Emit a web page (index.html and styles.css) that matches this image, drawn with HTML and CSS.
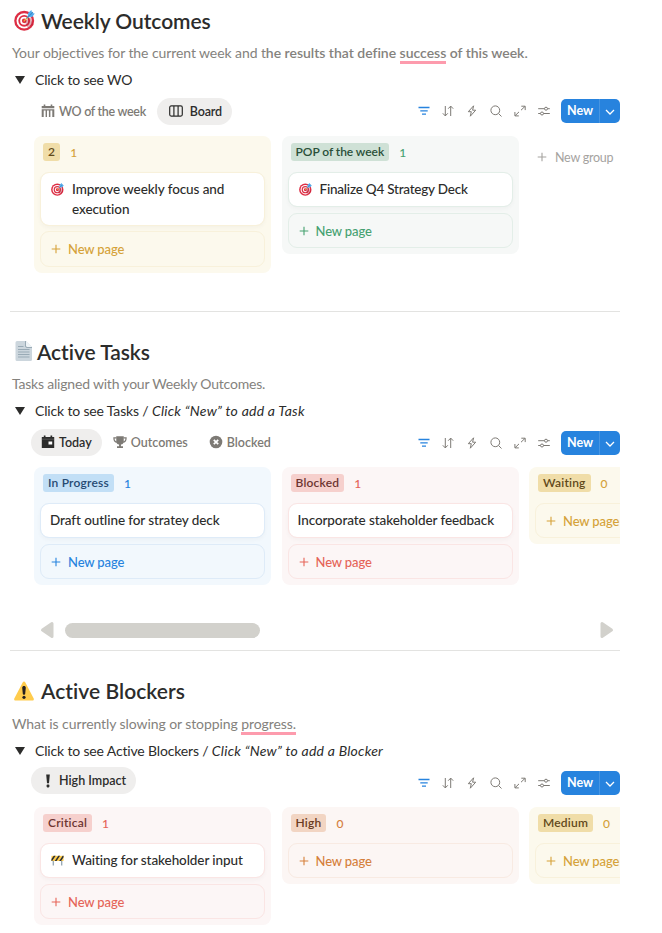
FILE: index.html
```html
<!DOCTYPE html>
<html lang="en">
<head>
  <meta charset="UTF-8" />
  <meta name="viewport" content="width=device-width, initial-scale=1.0" />
  <title>Weekly Outcomes</title>
  <link rel="stylesheet" href="styles.css">
</head>
<body>
  <!-- Shared icons -->
  <svg class="sprite" width="0" height="0">
    <symbol id="target" viewBox="0 0 20 20">
      <circle cx="9.7" cy="10.3" r="9.5" fill="#dd2e44" />
      <circle cx="9.7" cy="10.3" r="7.3" fill="#fff" />
      <circle cx="9.7" cy="10.3" r="5.6" fill="#dd2e44" />
      <circle cx="9.7" cy="10.3" r="3.8" fill="#fff" />
      <circle cx="9.7" cy="10.3" r="2.2" fill="#dd2e44" />
      <path d="M10 10.5l3 6.5 5.5-3-3-7z" fill="#a8122b" opacity=".35" />
      <path d="M9.3 10.8L16 4" stroke="#ffac33" stroke-width="1.2" />
      <path d="M13 6.8l.3-4L16.6 0l.6 2.8 2.6.5-2.5 3.4z" fill="#55acee" />
      <path d="M12 8l6-6" stroke="#3b88c3" stroke-width="1" />
    </symbol>
    <symbol id="page" viewBox="0 0 18 20">
      <path d="M2 0h9l6 6v12.500a1.500 1.500 0 0 1-1.500 1.500H2A1.500 1.500 0 0 1 .5 18.500v-17A1.500 1.500 0 0 1 2 0z" fill="#ccd6dd" />
      <path d="M11 0l6 6h-4.500A1.500 1.500 0 0 1 11 4.500z" fill="#eef3f6" />
      <path d="M10.500 0v5a1.500 1.500 0 0 0 1.500 1.500h5M3 5.500h5.500M3 8.500h11.500M3 11h11.500M3 13.500h11.500M3 16h11.500" fill="none" stroke="#99aab5" stroke-width="1" />
    </symbol>
    <symbol id="warning" viewBox="0 0 20 20">
      <path d="M8.800 1.200a1.400 1.400 0 0 1 2.400 0l8.500 16.400a1.300 1.300 0 0 1-1.200 1.900h-17a1.300 1.300 0 0 1-1.200-1.900z" fill="#ffcc4d" />
      <path d="M8.200 6.800c0-2.400 3.600-2.400 3.600 0l-.6 6c-.1 1.300-2.300 1.300-2.400 0z" fill="#231f20" />
      <circle cx="10" cy="16.300" r="1.600" fill="#231f20" />
    </symbol>
    <symbol id="barrier" viewBox="0 0 14 12">
      <path d="M2.500 5v6.500M11.500 5v6.500" stroke="#99aab5" stroke-width="1.500" />
      <rect x=".5" y="1" width="13" height="5.500" fill="#ffcc4d" />
      <path d="M.5 4.500L3 1h2L1.200 6.500H.5zM4 6.500L7.800 1h2L6 6.500zM8.800 6.500L12.600 1h.9v1.500l-2.700 4z" fill="#292f33" />
    </symbol>
    <symbol id="calendar" viewBox="0 0 14 14">
      <path d="M.7 2h2V.5h1.600V2h5.400V.5h1.600V2h2v2.300H.7z" fill="currentColor" />
      <path d="M.7 5.200h12.600V13H.7zM2.700 6.500V13h1.900V6.500zM6 6.500V13h1.900V6.500zM9.400 6.500V13h1.900V6.500z" fill="currentColor" fill-rule="evenodd" />
    </symbol>
    <symbol id="board" viewBox="0 0 14 12">
      <rect x=".7" y=".9" width="12.600" height="10.200" rx="1.500" fill="none" stroke="currentColor" stroke-width="1.200" />
      <path d="M4.900 1v10M9.100 1v10" stroke="currentColor" stroke-width="1.200" />
    </symbol>
    <symbol id="today" viewBox="0 0 14 14">
      <path d="M.8 2h2V.5h1.700V2h5V.5h1.700V2h2v11H.8z" fill="currentColor" />
      <path d="M.8 4.200h12.400" stroke="#777" stroke-width=".5" />
      <rect x="7.500" y="6.500" width="3.700" height="3" fill="#fff" />
    </symbol>
    <symbol id="trophy" viewBox="0 0 15 14">
      <path d="M3.500.8h8v5a4 4 0 0 1-3 4v1.700h2.200v1.800H4.300v-1.800h2.200V9.800a4 4 0 0 1-3-4z" fill="currentColor" />
      <path d="M3.800 2.600H1c0 3 1 4.300 3.400 4.500M11.200 2.600H14c0 3-1 4.300-3.400 4.500" fill="none" stroke="currentColor" stroke-width="1.300" />
    </symbol>
    <symbol id="cross" viewBox="0 0 14 14">
      <circle cx="7" cy="7" r="6.300" fill="currentColor" />
      <path d="M4.800 4.800l4.400 4.400M9.200 4.800L4.800 9.200" stroke="#fff" stroke-width="1.700" />
    </symbol>
    <symbol id="bang" viewBox="0 0 14 14">
      <path d="M5.200.5h3.600L8 9.300H6z" fill="currentColor" />
      <rect x="5.600" y="10.600" width="2.800" height="2.800" rx=".8" fill="currentColor" />
    </symbol>
    <symbol id="filter" viewBox="0 0 12 12">
      <path d="M.5 2.500h11M2.300 5.900h7.400M4 9.200h4" stroke="currentColor" stroke-width="1.300" />
    </symbol>
    <symbol id="sort" viewBox="0 0 12 12">
      <path d="M3.300 1v10M.8 8.300l2.500 2.600 2.500-2.600M8.700 11V1.200M6.200 3.700l2.500-2.600 2.500 2.600" />
    </symbol>
    <symbol id="bolt" viewBox="0 0 12 12">
      <path d="M7.600.8L2.300 6.700h3L4.300 11.200l5.400-6H6.600z" />
    </symbol>
    <symbol id="search" viewBox="0 0 12 12">
      <circle cx="5.300" cy="5.300" r="4.400" />
      <path d="M8.500 8.500l3 3" />
    </symbol>
    <symbol id="expand" viewBox="0 0 12 12">
      <path d="M7.300 1.200h3.900v3.900M11 1.400L7 5.200M4.800 10.900H.9V7M1.100 10.700L5 6.900" />
    </symbol>
    <symbol id="sliders" viewBox="0 0 12 12">
      <path d="M.2 3.700h6.200M9.600 3.700h2.200M.2 8.500h2.200M5.600 8.500h6.200" />
      <circle cx="8" cy="3.700" r="1.500" />
      <circle cx="4" cy="8.500" r="1.500" />
    </symbol>
    <symbol id="plus" viewBox="0 0 10 10">
      <path d="M5 .7v8.600M.7 5h8.600" stroke="currentColor" stroke-width="1.100" />
    </symbol>
    <symbol id="chevron" viewBox="0 0 10 10">
      <path d="M1 3l4 4 4-4" fill="none" stroke="currentColor" stroke-width="1.300" />
    </symbol>
  </svg>

  <main class="container">
    <section class="section outcomes">
      <h1><svg class="emoji"><use href="#target" /></svg>Weekly Outcomes</h1>
      <p class="description">Your objectives for the current week and t<b>he results that define <span class="underlined">success</span> of this week.</b></p>
      <div class="toggle"><span class="arrow"></span><span>Click to see WO</span></div>
      <div class="view-bar">
        <div class="tabs">
          <span class="tab wo-tab"><svg><use href="#calendar" /></svg>WO of the week</span>
          <span class="tab active board-tab"><svg><use href="#board" /></svg>Board</span>
        </div>
        <div class="tools">
          <svg class="filter"><use href="#filter" /></svg>
          <svg><use href="#sort" /></svg>
          <svg><use href="#bolt" /></svg>
          <svg><use href="#search" /></svg>
          <svg><use href="#expand" /></svg>
          <svg><use href="#sliders" /></svg>
          <div class="new-btn"><span class="new-label">New</span><span class="new-more"><svg><use href="#chevron" /></svg></span></div>
        </div>
      </div>
      <div class="board">
        <div class="column yellow">
          <div class="column-head"><span class="tag">2</span><span class="count">1</span></div>
          <div class="card"><svg class="card-icon"><use href="#target" /></svg><span>Improve weekly focus and execution</span></div>
          <div class="new-page"><svg><use href="#plus" /></svg>New page</div>
        </div>
        <div class="column green">
          <div class="column-head"><span class="tag">POP of the week</span><span class="count">1</span></div>
          <div class="card"><svg class="card-icon"><use href="#target" /></svg><span>Finalize Q4 Strategy Deck</span></div>
          <div class="new-page"><svg><use href="#plus" /></svg>New page</div>
        </div>
        <div class="new-group"><svg><use href="#plus" /></svg>New group</div>
      </div>
    </section>

    <section class="section tasks">
      <h1><svg class="emoji"><use href="#page" /></svg>Active Tasks</h1>
      <p class="description">Tasks aligned with your Weekly Outcomes.</p>
      <div class="toggle"><span class="arrow"></span><span>Click to see Tasks / <i>Click “New” to add a Task</i></span></div>
      <div class="view-bar">
        <div class="tabs">
          <span class="tab active"><svg><use href="#today" /></svg>Today</span>
          <span class="tab"><svg><use href="#trophy" /></svg>Outcomes</span>
          <span class="tab"><svg><use href="#cross" /></svg>Blocked</span>
        </div>
        <div class="tools">
          <svg class="filter"><use href="#filter" /></svg>
          <svg><use href="#sort" /></svg>
          <svg><use href="#bolt" /></svg>
          <svg><use href="#search" /></svg>
          <svg><use href="#expand" /></svg>
          <svg><use href="#sliders" /></svg>
          <div class="new-btn"><span class="new-label">New</span><span class="new-more"><svg><use href="#chevron" /></svg></span></div>
        </div>
      </div>
      <div class="board">
        <div class="column blue">
          <div class="column-head"><span class="tag">In Progress</span><span class="count">1</span></div>
          <div class="card"><span>Draft outline for stratey deck</span></div>
          <div class="new-page"><svg><use href="#plus" /></svg>New page</div>
        </div>
        <div class="column red">
          <div class="column-head"><span class="tag">Blocked</span><span class="count">1</span></div>
          <div class="card"><span>Incorporate stakeholder feedback</span></div>
          <div class="new-page"><svg><use href="#plus" /></svg>New page</div>
        </div>
        <div class="column yellow">
          <div class="column-head"><span class="tag">Waiting</span><span class="count">0</span></div>
          <div class="new-page"><svg><use href="#plus" /></svg>New page</div>
        </div>
      </div>
      <div class="scrollbar">
        <svg width="14" height="18" viewBox="0 0 14 18"><path d="M12 2.500v13L2.500 9z" /></svg>
        <span class="thumb"></span>
        <svg class="right" width="14" height="18" viewBox="0 0 14 18"><path d="M2 2.500v13L11.500 9z" /></svg>
      </div>
    </section>

    <section class="section blockers">
      <h1><svg class="emoji"><use href="#warning" /></svg>Active Blockers</h1>
      <p class="description">What is currently slowing or stopping <span class="underlined">progress.</span></p>
      <div class="toggle"><span class="arrow"></span><span>Click to see Active Blockers / <i>Click “New” to add a Blocker</i></span></div>
      <div class="view-bar">
        <div class="tabs">
          <span class="tab active"><svg><use href="#bang" /></svg>High Impact</span>
        </div>
        <div class="tools">
          <svg class="filter"><use href="#filter" /></svg>
          <svg><use href="#sort" /></svg>
          <svg><use href="#bolt" /></svg>
          <svg><use href="#search" /></svg>
          <svg><use href="#expand" /></svg>
          <svg><use href="#sliders" /></svg>
          <div class="new-btn"><span class="new-label">New</span><span class="new-more"><svg><use href="#chevron" /></svg></span></div>
        </div>
      </div>
      <div class="board">
        <div class="column red">
          <div class="column-head"><span class="tag">Critical</span><span class="count">1</span></div>
          <div class="card"><svg class="card-icon"><use href="#barrier" /></svg><span>Waiting for stakeholder input</span></div>
          <div class="new-page"><svg><use href="#plus" /></svg>New page</div>
        </div>
        <div class="column orange">
          <div class="column-head"><span class="tag">High</span><span class="count">0</span></div>
          <div class="new-page"><svg><use href="#plus" /></svg>New page</div>
        </div>
        <div class="column yellow">
          <div class="column-head"><span class="tag">Medium</span><span class="count">0</span></div>
          <div class="new-page"><svg><use href="#plus" /></svg>New page</div>
        </div>
      </div>
    </section>
  </main>
</body>
</html>
```
FILE: styles.css
```css
* {
  box-sizing: border-box;
}
body {
  font-family: Lato, "Open Sans", sans-serif;
  font-variant-ligatures: none;
  margin: 0;
  background-color: #fff;
  color: #2c2c2b;
}
.sprite {
  display: block;
}
.container {
  width: 610px;
  height: 933px;
  margin-left: 10px;
  overflow: hidden;
}
.section {
  border-bottom: 1px solid #e3e3e1;
}
.outcomes {
  height: 312px;
  margin-bottom: 19px;
}
.tasks {
  height: 320px;
  margin-bottom: 20px;
}
.blockers {
  border-bottom: none;
}
h1 {
  display: flex;
  align-items: center;
  gap: 7px;
  height: 42px;
  margin: 0;
  padding: 0 0 2px 4px;
  font-size: 21px;
  font-weight: 600;
  letter-spacing: -0.05px;
}
.emoji {
  width: 20px;
  height: 20px;
}
.outcomes .emoji {
  width: 21px;
  height: 21px;
  margin-right: -1px;
}
.tasks h1 {
  gap: 3px;
}
.blockers h1 {
  padding-bottom: 3px;
  letter-spacing: 0.05px;
}
.description {
  height: 22px;
  line-height: 22px;
  margin: 0;
  padding-left: 2px;
  font-size: 14px;
  letter-spacing: -0.08px;
  color: #84827d;
  white-space: nowrap;
}
.tasks .description {
  letter-spacing: -0.2px;
}
.description b {
  font-weight: 600;
  letter-spacing: -0.02px;
}
.underlined {
  border-bottom: 3px solid #fd9bad;
}
.toggle {
  display: flex;
  align-items: center;
  gap: 11px;
  height: 32px;
  padding: 0 0 1px 5px;
  font-size: 14px;
  letter-spacing: -0.16px;
}
.toggle i {
  letter-spacing: 0.24px;
}
.arrow {
  border-left: 5px solid transparent;
  border-right: 5px solid transparent;
  border-top: 8px solid #2c2c2b;
  margin-right: -1px;
}
.view-bar {
  display: flex;
  justify-content: space-between;
  align-items: center;
  height: 30px;
  padding-left: 21px;
  margin-bottom: 10px;
}
.tabs {
  display: flex;
  gap: 1px;
}
.blockers .tabs {
  padding-bottom: 3px;
}
.tab {
  display: flex;
  align-items: center;
  gap: 4px;
  height: 27px;
  padding: 0 10px;
  border-radius: 14px;
  font-size: 12.5px;
  font-weight: 600;
  color: #7d7a75;
}
.tab svg {
  width: 14px;
  height: 14px;
}
.wo-tab {
  letter-spacing: -0.3px;
}
.tab.active {
  background-color: #efeeed;
  color: #2c2c2b;
}
.board-tab {
  gap: 7px;
  padding-left: 12px;
  letter-spacing: -0.2px;
}
.tools {
  display: flex;
  align-items: center;
  gap: 12px;
  color: #7d7a75;
}
.tasks .tools, .blockers .tools {
  padding-top: 2px;
}
.tools > svg {
  width: 12px;
  height: 12px;
  fill: none;
  stroke: currentColor;
  stroke-width: 1;
}
.tools .filter {
  color: #2783de;
}
.new-btn {
  display: flex;
  width: 59px;
  height: 24px;
  margin-left: -1px;
  border-radius: 5px;
  background-color: #2783de;
  color: #fff;
  font-size: 12.5px;
  font-weight: 700;
  line-height: 24px;
}
.new-label {
  width: 38px;
  text-align: center;
}
.new-more {
  display: flex;
  flex: 1;
  align-items: center;
  justify-content: center;
  border-left: 1px solid #4795e2;
}
.new-more svg {
  width: 10px;
  height: 10px;
  margin-top: 1px;
}
.board {
  display: flex;
  align-items: flex-start;
  gap: 10.5px;
  padding-left: 24px;
  overflow: hidden;
}
.column {
  flex: 0 0 237px;
  padding: 7px 6px 6px;
  border-radius: 8px;
}
.column-head {
  display: flex;
  align-items: center;
  gap: 10px;
  height: 18px;
  margin: 0 0 10.5px 3px;
  font-size: 12px;
}
.tag {
  height: 18px;
  line-height: 18px;
  padding: 0 5px;
  border-radius: 3px;
  font-weight: 600;
  letter-spacing: 0.2px;
}
.count {
  font-weight: 500;
}
.card, .new-page {
  display: flex;
  border-radius: 9px;
  padding: 6.5px 9px 5.5px;
  line-height: 20px;
}
.card {
  min-height: 35.5px;
  margin-bottom: 5.7px;
  background-color: #fff;
  border: 1px solid transparent;
  background-clip: padding-box;
  box-shadow: 0 2px 4px rgba(0, 0, 0, 0.03);
  font-size: 13.5px;
  font-weight: 500;
  letter-spacing: -0.08px;
}
.tasks .card {
  padding-top: 6px;
}
.green .card {
  letter-spacing: -0.22px;
}
.card-icon {
  flex: none;
  width: 13px;
  height: 13px;
  margin: 4px 8px 0 1px;
}
.new-page {
  align-items: center;
  gap: 7px;
  height: 35.5px;
  padding-left: 10px;
  border: 1px solid;
  font-size: 13px;
  font-weight: 500;
  letter-spacing: -0.12px;
  white-space: nowrap;
}
.new-page svg, .new-group svg {
  width: 10px;
  height: 10px;
}
.new-group {
  display: flex;
  align-items: center;
  gap: 8px;
  height: 42px;
  padding-left: 8px;
  font-size: 12.5px;
  letter-spacing: -0.25px;
  color: #a5a39f;
  white-space: nowrap;
}
.yellow { background-color: #fcf9ed; }
.yellow .tag { background-color: #f0dda8; color: #61491a; }
.yellow .count, .yellow .new-page { color: #d5a239; }
.yellow .card, .yellow .new-page { border-color: #f8f1db; }
.green { background-color: #f6f8f7; }
.green .tag { background-color: #cfe1d6; color: #2a5039; letter-spacing: -0.05px; }
.green .count, .green .new-page { color: #46a171; }
.green .card, .green .new-page { border-color: #e3eee8; }
.blue { background-color: #f2f8fd; }
.blue .tag { background-color: #c2dff6; color: #264a72; }
.blue .count, .blue .new-page { color: #2783de; }
.blue .card, .blue .new-page { border-color: #deebf8; }
.red { background-color: #fcf6f6; }
.red .tag { background-color: #f6d0cd; color: #6d3531; }
.red .count, .red .new-page { color: #e56458; }
.red .card, .red .new-page { border-color: #fae5e4; }
.orange { background-color: #fcf6f4; }
.orange .tag { background-color: #f2d5c3; color: #6a3b21; }
.orange .count, .orange .new-page { color: #d5803b; }
.orange .new-page { border-color: #f8eae2; }
.scrollbar {
  display: flex;
  align-items: center;
  height: 18px;
  margin-top: 36px;
  padding-left: 30px;
}
.scrollbar svg {
  fill: #d2d1cc;
  stroke: #d2d1cc;
  stroke-width: 3;
  stroke-linejoin: round;
}
.scrollbar .right {
  margin-left: auto;
  margin-right: 6px;
}
.thumb {
  width: 195px;
  height: 15px;
  margin-left: 11px;
  border-radius: 8px;
  background-color: #d2d1cc;
}
```
